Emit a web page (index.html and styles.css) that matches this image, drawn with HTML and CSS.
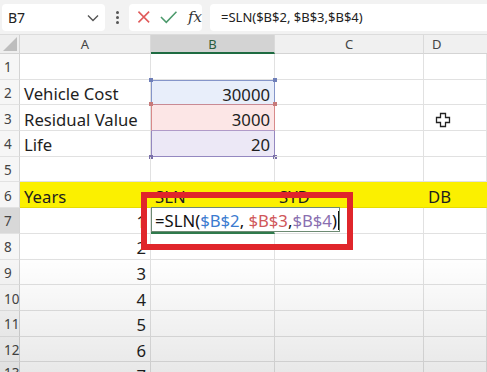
FILE: index.html
```html
<!DOCTYPE html>
<html>
<head>
<meta charset="utf-8">
<link rel="stylesheet" href="styles.css">
</head>
<body>
<div class="app">
  <div class="toolbar">
    <div class="namebox">
      <span>B7</span>
      <svg class="chev" width="12" height="8" viewBox="0 0 12 8"><path d="M1 1.5 L6 6.5 L11 1.5" fill="none" stroke="#555" stroke-width="1.4"/></svg>
    </div>
    <div class="dots"><i></i><i></i><i></i></div>
    <div class="actions">
      <svg width="14" height="14" viewBox="0 0 14 14"><path d="M1.5 1.5 L12.5 12.5 M12.5 1.5 L1.5 12.5" stroke="#e05a5a" stroke-width="1.6" fill="none"/></svg>
      <svg width="18" height="14" viewBox="0 0 18 14"><path d="M1 7 L6.5 12.5 L17 1.5" stroke="#4c9a6c" stroke-width="1.6" fill="none"/></svg>
      <span class="fx">fx</span>
    </div>
    <div class="formula">=SLN($B$2, $B$3,$B$4)</div>
  </div>
  <div class="sheet">
    <div class="corner"><svg width="14" height="14" viewBox="0 0 14 14"><path d="M14 0 L14 14 L0 14 Z" fill="#bdbdbd"/></svg></div>
    <div class="colh">A</div>
    <div class="colh sel">B</div>
    <div class="colh">C</div>
    <div class="colh d">D</div>

    <div class="rowh">1</div><div class="c"></div><div class="c"></div><div class="c"></div><div class="c"></div>
    <div class="rowh">2</div><div class="c">Vehicle Cost</div><div class="c num r-blue">30000<b class="h tl"></b><b class="h tr"></b></div><div class="c"></div><div class="c"></div>
    <div class="rowh">3</div><div class="c">Residual Value</div><div class="c num r-red">3000<b class="h tl"></b><b class="h tr"></b></div><div class="c"></div><div class="c"></div>
    <div class="rowh">4</div><div class="c">Life</div><div class="c num r-purple">20<b class="h bl"></b><b class="h br"></b></div><div class="c"></div><div class="c"></div>
    <div class="rowh">5</div><div class="c"></div><div class="c"></div><div class="c"></div><div class="c"></div>
    <div class="rowh">6</div><div class="c y">Years</div><div class="c y">SLN</div><div class="c y">SYD</div><div class="c y">DB</div>
    <div class="rowh act">7</div><div class="c num">1</div><div class="c active"><div class="edit"><span class="etext">=SLN(<span class="blue">$B$2</span>, <span class="red">$B$3</span>,<span class="purple">$B$4</span>)</span><span class="caret"></span></div></div><div class="c"></div><div class="c"></div>
    <div class="rowh">8</div><div class="c num">2</div><div class="c"></div><div class="c"></div><div class="c"></div>
    <div class="rowh">9</div><div class="c num">3</div><div class="c"></div><div class="c"></div><div class="c"></div>
    <div class="rowh">10</div><div class="c num">4</div><div class="c"></div><div class="c"></div><div class="c"></div>
    <div class="rowh">11</div><div class="c num">5</div><div class="c"></div><div class="c"></div><div class="c"></div>
    <div class="rowh">12</div><div class="c num">6</div><div class="c"></div><div class="c"></div><div class="c"></div>
    <div class="rowh last">13</div><div class="c num last">7</div><div class="c"></div><div class="c"></div><div class="c"></div>

    <div class="redbox"></div>
    <svg class="cursor" width="16" height="16" viewBox="0 0 16 16"><path d="M5.5 1.5 H10.5 V5.5 H14.5 V10.5 H10.5 V14.5 H5.5 V10.5 H1.5 V5.5 H5.5 Z" fill="#fff" stroke="#222" stroke-width="1.3"/></svg>
    <div class="shade"></div>
  </div>
</div>
</body>
</html>
```

FILE: styles.css
```css
* { box-sizing: border-box; }
html, body { margin: 0; padding: 0; }
body {
  width: 487px;
  height: 372px;
  overflow: hidden;
  background: #fff;
  font-family: "Noto Sans", "Liberation Sans", sans-serif;
  color: #222;
}
.app { width: 487px; height: 372px; display: flex; flex-direction: column; }
.toolbar {
  height: 35px;
  background: #f2f2f2;
  display: flex;
  align-items: center;
  padding: 0 0 0 2px;
  border-bottom: 1px solid #dcdcdc;
}
.namebox {
  width: 103px;
  height: 27px;
  background: #fff;
  border-radius: 4px;
  display: flex;
  align-items: center;
  justify-content: space-between;
  padding: 0 6px 0 6px;
  font-size: 14px;
  color: #222;
}
.chev { margin-top: 1px; }
.dots {
  width: 24px;
  display: flex;
  flex-direction: column;
  align-items: center;
  gap: 2px;
}
.dots i { width: 3px; height: 3px; background: #555; border-radius: 50%; display: block; }
.actions {
  width: 73px;
  height: 27px;
  background: #fff;
  border-radius: 4px;
  display: flex;
  align-items: center;
  padding: 0 0 0 8px;
  gap: 9px;
}
.fx {
  font-family: "DejaVu Serif", "Liberation Serif", serif;
  font-style: italic;
  font-size: 15px;
  color: #333;
  margin-left: 2px;
}
.formula {
  flex: 1;
  height: 27px;
  margin-left: 8px;
  background: #fff;
  border-radius: 4px 0 0 4px;
  display: flex;
  align-items: center;
  padding-left: 11px;
  font-size: 13px;
  color: #222;
}
.sheet {
  position: relative;
  flex: 1;
  display: grid;
  grid-template-columns: 20px 131px 124px 149px 63px;
  grid-template-rows: 19px repeat(13, 25.7px);
  overflow: hidden;
}
.corner {
  background: #eeeeee;
  border-right: 1px solid #d4d4d4;
  border-bottom: 1px solid #d4d4d4;
  display: flex;
  align-items: flex-end;
  justify-content: flex-end;
  padding: 0 2px 2px 0;
}
.colh {
  background: #f0f0f0;
  border-right: 1px solid #dadada;
  border-bottom: 1px solid #d4d4d4;
  font-size: 13px;
  color: #444;
  display: flex;
  align-items: center;
  justify-content: center;
}
.colh.sel {
  background: #d3d3d3;
  border-bottom: 2px solid #1e6b41;
  color: #2b5d3e;
}
.colh.d { justify-content: flex-start; padding-left: 8px; border-right: none; }
.rowh {
  background: #f6f6f6;
  border-right: 1px solid #d4d4d4;
  border-bottom: 1px solid #e2e2e2;
  font-size: 13.5px;
  color: #444;
  display: flex;
  align-items: center;
  padding: 2px 0 0 4px;
}
.rowh.act { background: #d8d8d8; }
.c {
  position: relative;
  border-right: 1px solid #e1e1e1;
  border-bottom: 1px solid #e1e1e1;
  font-size: 16.7px;
  color: #1e1e1e;
  display: flex;
  align-items: center;
  padding: 3px 4px 0 4px;
  white-space: nowrap;
}
.c.num { justify-content: flex-end; }
.c.last, .rowh.last { align-items: flex-start; padding-top: 2px; }
.c.y { background: #fbf000; border-right-color: #fbf000; border-bottom-color: #e6dc00; }
.r-blue { background: #e8eefa; border: 1px solid #8595c9; border-bottom-color: #c98a94; }
.r-red { background: #fce6e6; border: 1px solid #d88a8a; border-top: none; border-bottom-color: #b09ac8; }
.r-purple { background: #ece8f6; border: 1px solid #9488c0; border-top: none; }
.h { position: absolute; width: 4px; height: 4px; display: block; }
.r-blue .h { background: #6f7fb8; }
.r-red .h { background: #c77a7a; }
.r-purple .h { background: #7a70a8; }
.h.tl { left: -3px; top: -3px; }
.h.tr { right: -3px; top: -3px; }
.h.bl { left: -3px; bottom: -3px; }
.h.br { right: -3px; bottom: -3px; }
.c.active { border-bottom: 2px solid #2f7a4c; }
.edit {
  position: absolute;
  left: 0;
  top: -1px;
  height: 25px;
  width: 189px;
  background: #fff;
  border: 1px solid #6d8a73;
  z-index: 2;
  display: flex;
  align-items: center;
  padding: 2px 0 0 3px;
  font-size: 16.7px;
  color: #111;
}
.etext { white-space: pre; }
.blue { color: #3b7bd0; }
.red { color: #d0575a; }
.purple { color: #8a6fb0; }
.caret { display: inline-block; width: 1px; height: 19px; background: #111; margin-left: 1px; }
.redbox {
  position: absolute;
  left: 141px;
  top: 157px;
  width: 212px;
  height: 58px;
  border: 6px solid #e0262b;
  z-index: 3;
}
.cursor { position: absolute; left: 435px; top: 77px; z-index: 3; }
.shade {
  position: absolute;
  left: 0; right: 0; top: 220px; bottom: 0;
  background: linear-gradient(to bottom, rgba(0,0,0,0), rgba(0,0,0,0.09));
  pointer-events: none;
  z-index: 4;
}
```
